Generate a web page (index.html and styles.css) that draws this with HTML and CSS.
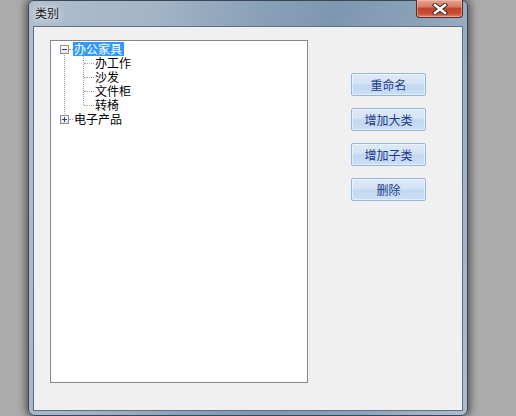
FILE: index.html
```html
<!DOCTYPE html>
<html lang="zh-CN">
<head>
  <meta charset="UTF-8" />
  <title>类别</title>
  <link rel="stylesheet" href="styles.css">
</head>
<body>
  <div class="window">
    <div class="titlebar">
      <span class="title">类别</span>
      <button class="close-btn" aria-label="关闭">
        <svg width="16" height="12" viewBox="0 0 16 12">
          <path d="M3 2 L13 10 M13 2 L3 10" stroke="#3a2a28" stroke-width="4.5" stroke-linecap="square"/>
          <path d="M3 2 L13 10 M13 2 L3 10" stroke="#fff" stroke-width="2.5" stroke-linecap="square"/>
        </svg>
      </button>
    </div>
    <div class="client">
      <div class="tree-box">
        <ul class="tree">
          <li class="node open">
            <div class="row">
              <span class="toggle">
                <svg width="9" height="9" viewBox="0 0 9 9"><path d="M2 4.5 H7" stroke="#2b3f8c" stroke-width="1"/></svg>
              </span>
              <span class="hline short"></span>
              <span class="label selected">办公家具</span>
            </div>
            <ul class="children">
              <li><div class="row"><span class="hline"></span><span class="label">办工作</span></div></li>
              <li><div class="row"><span class="hline"></span><span class="label">沙发</span></div></li>
              <li><div class="row"><span class="hline"></span><span class="label">文件柜</span></div></li>
              <li><div class="row"><span class="hline"></span><span class="label">转椅</span></div></li>
            </ul>
          </li>
          <li class="node">
            <div class="row">
              <span class="toggle">
                <svg width="9" height="9" viewBox="0 0 9 9"><path d="M2 4.5 H7 M4.5 2 V7" stroke="#2b3f8c" stroke-width="1"/></svg>
              </span>
              <span class="hline short"></span>
              <span class="label">电子产品</span>
            </div>
          </li>
        </ul>
      </div>
      <div class="actions">
        <button class="btn">重命名</button>
        <button class="btn">增加大类</button>
        <button class="btn">增加子类</button>
        <button class="btn">删除</button>
      </div>
    </div>
  </div>
</body>
</html>
```

FILE: styles.css
```css
:root {
  --frame-light: #adbccc;
  --frame-dark: #7f98b1;
  --client-bg: #f0f0f0;
  --tree-border: #828790;
  --line: #a0a0a0;
  --select: #3399ff;
  --btn-text: #1c3a8a;
}

* {
  box-sizing: border-box;
}

html, body {
  margin: 0;
  height: 100%;
}

body {
  background: #ababab;
  font-family: "Noto Sans CJK SC", "Liberation Sans", sans-serif;
  font-size: 12px;
  overflow: hidden;
}

/* Window frame */

.window {
  margin-left: 28px;
  width: 440px;
  height: 416px;
  border: 1px solid #3a4656;
  border-radius: 6px 6px 7px 7px;
  background: linear-gradient(100deg, #afbecd 0%, #a3b4c6 25%, #8aa1b8 45%, #7e97b0 60%, #8ba2b9 78%, #aebdcc 100%);
  box-shadow: 0 0 9px 2px rgba(0, 0, 0, 0.55);
  padding: 0 4px 4px;
  display: flex;
  flex-direction: column;
}

.titlebar {
  height: 25px;
  display: flex;
  align-items: flex-start;
  flex-shrink: 0;
}

.title {
  margin: 5px 0 0 2px;
  color: #1b1b1b;
  line-height: 14px;
  text-shadow: 0 0 6px rgba(255, 255, 255, 0.9), 0 0 10px rgba(255, 255, 255, 0.7);
}

.close-btn {
  margin-left: auto;
  margin-right: 0;
  width: 47px;
  height: 18px;
  margin-top: -1px;
  border: 1px solid #5a2a24;
  border-top: none;
  border-radius: 0 0 4px 4px;
  background: linear-gradient(#e5a594 0%, #d77a63 40%, #c2432c 50%, #c84d35 80%, #e0846a 100%);
  box-shadow: inset 0 0 0 1px rgba(255, 210, 200, 0.45);
  display: flex;
  align-items: center;
  justify-content: center;
  padding: 0;
}

/* Client area */

.client {
  flex: 1;
  border: 1px solid #5c6f86;
  background: var(--client-bg);
  display: flex;
  align-items: flex-start;
  padding: 13px 0 0 16px;
}

.tree-box {
  width: 258px;
  height: 343px;
  border: 1px solid var(--tree-border);
  background: #fff;
  padding: 1px 0 0 9px;
  flex-shrink: 0;
}

.tree, .tree ul {
  list-style: none;
  margin: 0;
  padding: 0;
}

.node {
  position: relative;
}

.node.open::before {
  content: "";
  position: absolute;
  left: 4px;
  top: 11px;
  bottom: -4px;
  border-left: 1px dotted var(--line);
}

.row {
  display: flex;
  align-items: center;
  height: 14px;
}

.toggle {
  width: 9px;
  height: 9px;
  border: 1px solid #919191;
  background: linear-gradient(#ffffff, #e4e4e4);
  display: flex;
  position: relative;
  z-index: 1;
}

.toggle svg {
  margin: -1px;
}

.hline {
  width: 10px;
  border-top: 1px dotted var(--line);
}

.hline.short {
  width: 4px;
}

.label {
  padding: 0 2px 0 1px;
  line-height: 14px;
  color: #000;
  white-space: nowrap;
}

.label.selected {
  background: var(--select);
  color: #fff;
}

.children {
  position: relative;
  margin-left: 23px !important;
}

.children::before {
  content: "";
  position: absolute;
  left: 0;
  top: 0;
  bottom: 7px;
  border-left: 1px dotted var(--line);
}

.children .hline {
  margin-left: 1px;
}

/* Buttons */

.actions {
  display: flex;
  flex-direction: column;
  gap: 12px;
  margin-left: 43px;
  padding-top: 33px;
}

.btn {
  width: 75px;
  height: 23px;
  border: 1px solid #98b5dc;
  border-radius: 2px;
  background: linear-gradient(#dde9f8 0%, #d3e3f6 45%, #c3d8f1 52%, #cadef4 100%);
  box-shadow: inset 0 0 0 1px rgba(255, 255, 255, 0.5);
  color: var(--btn-text);
  font-family: inherit;
  font-size: 12px;
  padding: 0;
  cursor: pointer;
}
```
